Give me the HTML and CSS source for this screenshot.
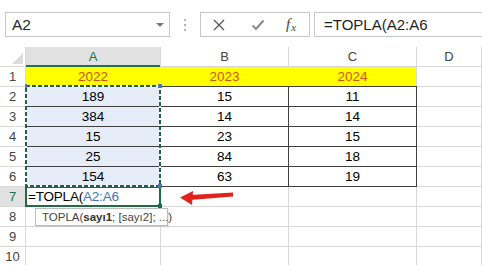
FILE: index.html
```html
<!DOCTYPE html>
<html>
<head>
<meta charset="utf-8">
<link rel="stylesheet" href="styles.css">
</head>
<body>
<div class="toolbar">
  <div class="namebox"><span class="nb-text">A2</span><span class="nb-arrow"></span></div>
  <div class="dots"><span></span><span></span><span></span></div>
  <div class="fnbox">
    <span class="fb fb-x"><svg width="12" height="12" viewBox="0 0 12 12"><path d="M1 1L11 11M11 1L1 11" stroke="#5a5a5a" stroke-width="1.4" fill="none"/></svg></span>
    <span class="fb fb-ok"><svg width="14" height="12" viewBox="0 0 14 12"><path d="M1.5 6.5L5 10L12.5 1.5" stroke="#8c8c8c" stroke-width="2.2" fill="none"/></svg></span>
    <span class="fb fb-fx"><i>f</i><i class="fx-x">x</i></span>
  </div>
  <div class="formula">=TOPLA(A2:A6</div>
</div>

<div class="sheet">
  <div class="corner"><span class="tri"></span></div>
  <div class="ch ch-sel">A</div><div class="ch">B</div><div class="ch">C</div><div class="ch">D</div><div class="ch"></div>

  <div class="rh">1</div><div class="c yr yr-join">2022</div><div class="c yr yr-join">2023</div><div class="c yr">2024</div><div class="c"></div><div class="c"></div>

  <div class="rh">2</div><div class="c d sel">189</div><div class="c d">15</div><div class="c d">11</div><div class="c"></div><div class="c"></div>
  <div class="rh">3</div><div class="c d sel">384</div><div class="c d">14</div><div class="c d">14</div><div class="c"></div><div class="c"></div>
  <div class="rh">4</div><div class="c d sel">15</div><div class="c d">23</div><div class="c d">15</div><div class="c"></div><div class="c"></div>
  <div class="rh">5</div><div class="c d sel">25</div><div class="c d">84</div><div class="c d">18</div><div class="c"></div><div class="c"></div>
  <div class="rh">6</div><div class="c d sel">154</div><div class="c d">63</div><div class="c d">19</div><div class="c"></div><div class="c"></div>

  <div class="rh rh-sel">7</div><div class="c edit">=TOPLA(<span class="ref">A2:A6</span></div><div class="c"></div><div class="c"></div><div class="c"></div><div class="c"></div>
  <div class="rh">8</div><div class="c"></div><div class="c"></div><div class="c"></div><div class="c"></div><div class="c"></div>
  <div class="rh">9</div><div class="c"></div><div class="c"></div><div class="c"></div><div class="c"></div><div class="c"></div>
  <div class="rh">10</div><div class="c"></div><div class="c"></div><div class="c"></div><div class="c"></div><div class="c"></div>

  <svg class="overlay" width="482" height="219" viewBox="0 0 482 219">
    <rect x="26" y="140" width="134" height="19" fill="none" stroke="#1f6b45" stroke-width="2"/>
    <rect x="26" y="39" width="134" height="100" fill="none" stroke="#fff" stroke-width="2"/>
    <rect x="26" y="39" width="134" height="100" fill="none" stroke="#245f4c" stroke-width="2" stroke-dasharray="4 2"/>
    <rect x="25" y="37" width="2" height="4" fill="#4a78b8"/>
    <rect x="158" y="37" width="4" height="4" fill="#4a78b8"/>
    <rect x="158" y="137" width="4" height="4" fill="#4a78b8"/>
    <rect x="158" y="157" width="4" height="4" fill="#1f6b45"/>
    <polygon points="190,148 233,145.5 233,149.5 190,153" fill="#e3221c"/>
    <polygon points="180,150.5 193,144 192,158" fill="#e3221c"/>
  </svg>

  <div class="tip">TOPLA(<b>sayı1</b>; [sayı2]; ...)</div>
</div>
</body>
</html>
```

FILE: styles.css
```css
html, body {
  margin: 0;
  padding: 0;
  background: #fff;
  width: 482px;
  height: 265px;
  overflow: hidden;
}

body {
  font-family: "Liberation Sans", Arial, sans-serif;
}

.toolbar {
  height: 47px;
  box-sizing: border-box;
  padding: 12px 0 0 5px;
  display: flex;
  align-items: flex-start;
}

.namebox {
  width: 165px;
  height: 25px;
  box-sizing: border-box;
  border: 1px solid #c6c6c6;
  display: flex;
  align-items: center;
  justify-content: space-between;
  padding: 0 5px 0 6px;
}

.nb-text {
  font-size: 15.5px;
  color: #262626;
}

.nb-arrow {
  width: 0;
  height: 0;
  border-left: 4px solid transparent;
  border-right: 4px solid transparent;
  border-top: 4px solid #7a7a7a;
}

.dots {
  width: 30px;
  height: 25px;
  display: flex;
  flex-direction: column;
  align-items: center;
  justify-content: center;
  gap: 3px;
}

.dots span {
  width: 2px;
  height: 2px;
  background: #b5b5b5;
}

.fnbox {
  width: 110px;
  height: 25px;
  box-sizing: border-box;
  border: 1px solid #c6c6c6;
  display: flex;
  align-items: center;
}

.fb {
  display: flex;
  align-items: center;
  justify-content: center;
  height: 23px;
}

.fb-x { width: 35px; }
.fb-ok { width: 44px; }
.fb-fx {
  width: 22px;
  font-family: "Liberation Serif", serif;
  font-size: 15px;
  color: #444;
}

.fx-x {
  font-size: 11px;
  margin-top: 4px;
  margin-left: 1px;
}

.formula {
  flex: 1;
  margin-left: 4px;
  margin-right: -3px;
  height: 25px;
  box-sizing: border-box;
  border: 1px solid #c6c6c6;
  font-size: 15px;
  line-height: 23px;
  padding-left: 9px;
  color: #1f1f1f;
}

.sheet {
  position: relative;
  display: grid;
  grid-template-columns: 25px 134px 127px 127px 64px 1fr;
  grid-auto-rows: 19px;
  gap: 1px;
  background: #d9d9d9;
  font-size: 13.5px;
}

.corner {
  background: #fff;
  display: flex;
  align-items: flex-end;
  justify-content: flex-end;
  padding: 0 2px 2px 0;
}

.tri {
  width: 0;
  height: 0;
  border-left: 11px solid transparent;
  border-bottom: 11px solid #dcdcdc;
}

.ch {
  background: #fff;
  color: #444;
  text-align: center;
  line-height: 19px;
  font-size: 13px;
}

.ch-sel {
  background: #e1e1e1;
  color: #217346;
  box-shadow: inset 0 -1px 0 #217346, 0 1px 0 #217346;
}

.rh {
  background: #fff;
  color: #444;
  text-align: center;
  line-height: 20px;
  font-size: 13px;
}

.rh-sel {
  background: #e1e1e1;
  color: #217346;
}

.c {
  background: #fff;
  color: #000;
  text-align: center;
  line-height: 20px;
  white-space: nowrap;
}

.yr {
  background: #ffff00;
  color: #d4531a;
}

.yr-join {
  box-shadow: 1px 0 0 #ffff00;
}

.d {
  outline: 1px solid #404040;
}

.sel {
  background: #e6edf8;
}

.edit {
  text-align: left;
  padding-left: 2px;
  overflow: visible;
  letter-spacing: -0.2px;
}

.ref {
  color: #3b78b6;
}

.overlay {
  position: absolute;
  left: 0;
  top: 0;
  z-index: 2;
  pointer-events: none;
}

.tip {
  position: absolute;
  z-index: 3;
  left: 35px;
  top: 161px;
  width: 133px;
  height: 18px;
  box-sizing: border-box;
  border: 1px solid #bdbdbd;
  background: #fff;
  color: #444;
  font-size: 11.5px;
  line-height: 16px;
  padding-left: 6px;
  white-space: nowrap;
  box-shadow: 1px 1px 1px rgba(0,0,0,0.08);
}

.tip b {
  color: #333;
}
```
